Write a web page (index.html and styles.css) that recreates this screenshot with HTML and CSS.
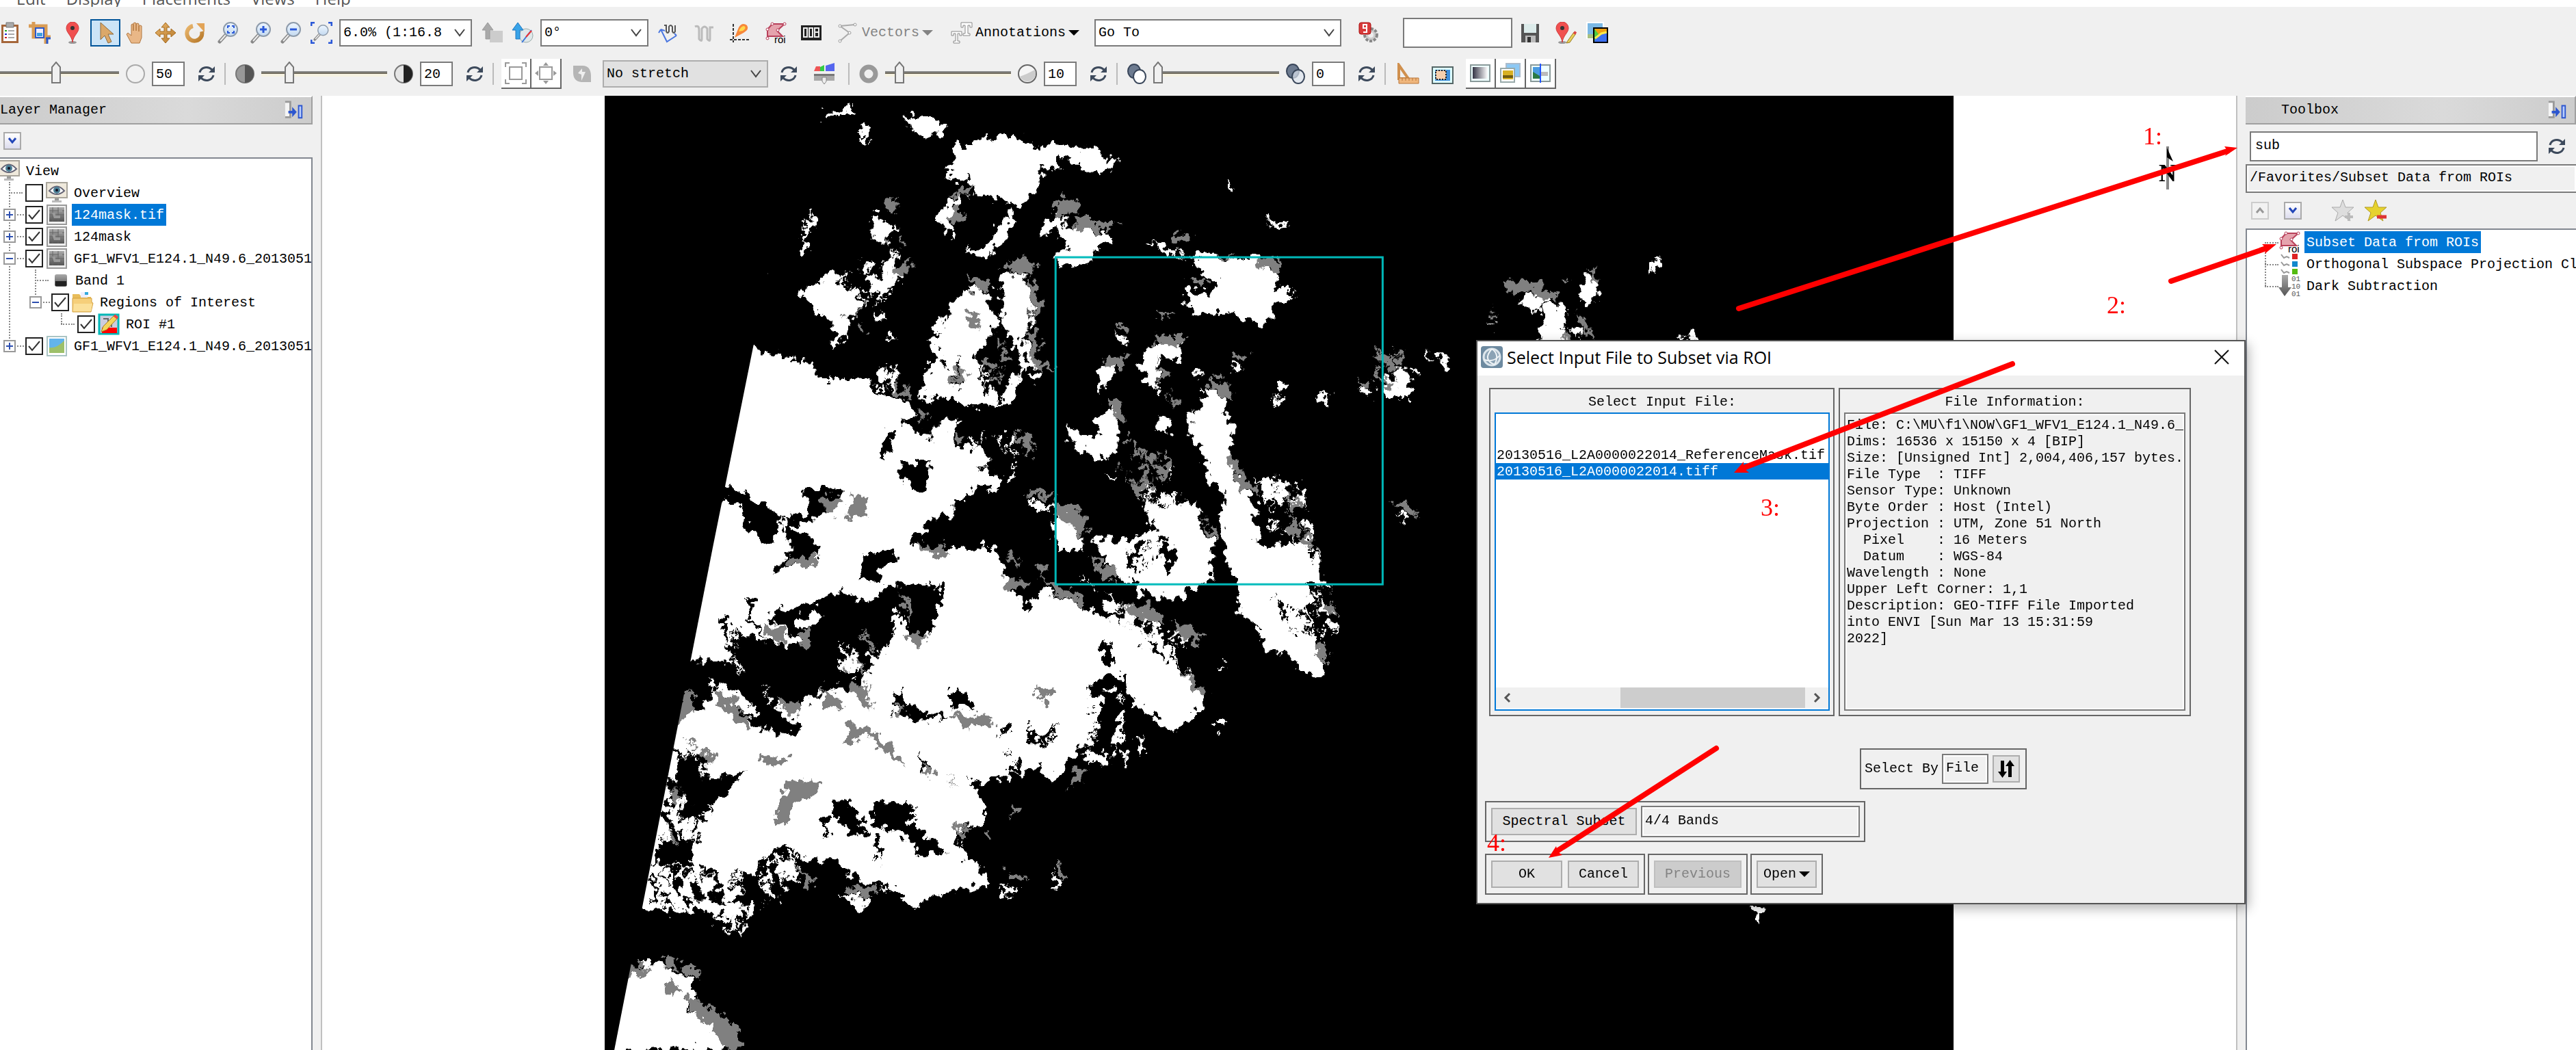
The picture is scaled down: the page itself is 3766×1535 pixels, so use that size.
FILE: index.html
```html
<!DOCTYPE html>
<html lang="en">
<head>
<meta charset="utf-8">
<title>ENVI</title>
<link rel="stylesheet" href="styles.css">
</head>
<body>
<svg class="defs" aria-hidden="true">
  <defs>
    <linearGradient id="glass" x1="0" y1="0" x2="0" y2="1"><stop offset="0" stop-color="#eef6ff"/><stop offset="1" stop-color="#c3d9f0"/></linearGradient>
    <linearGradient id="steel" x1="0" y1="0" x2="0" y2="1"><stop offset="0" stop-color="#aaa"/><stop offset="1" stop-color="#555"/></linearGradient>
    <linearGradient id="gold" x1="0" y1="0" x2="1" y2="1"><stop offset="0" stop-color="#e9b66d"/><stop offset="1" stop-color="#b87a2b"/></linearGradient>
  </defs>
  <symbol id="refresh" viewBox="0 0 32 32"><g fill="none" stroke="#3d4a5c" stroke-width="3"><path d="M6 14C8 6 18 4 24 10"/><path d="M26 18C24 26 14 28 8 22"/></g><path d="M28 5v9h-9zM4 27v-9h9z" fill="#3d4a5c"/></symbol>
  <symbol id="lens" viewBox="0 0 32 32"><path d="M13 18 3 29" stroke="#888" stroke-width="5" stroke-linecap="round"/><path d="M12 19 4 28" stroke="#eee" stroke-width="2"/><circle cx="19" cy="11" r="10" fill="url(#glass)" stroke="#8d9bab" stroke-width="2"/></symbol>
  <symbol id="pin" viewBox="0 0 32 32"><ellipse cx="16" cy="30" rx="6" ry="2" fill="#999"/><path d="M16 30C15 20 7 16 7 9a9 9 0 0 1 18 0c0 7-8 11-9 21z" fill="#f05050" stroke="#d03a3a"/><circle cx="16" cy="9" r="3" fill="#333"/></symbol>
  <symbol id="eye" viewBox="0 0 32 32"><rect x="1" y="1" width="30" height="22" fill="#efe9dc" stroke="#a9a59b" stroke-width="2"/><path d="M5 13Q16 0 27 13Q16 23 5 13z" fill="#fff" stroke="#667" stroke-width="2"/><circle cx="16" cy="12" r="5" fill="#4c7f95"/><circle cx="16" cy="12" r="2" fill="#112"/><path d="M13 24h6v3h-6z" fill="#999"/><path d="M9 27h14v3H9z" fill="#bbb"/></symbol>
  <symbol id="raster" viewBox="0 0 32 32"><rect x="2" y="2" width="28" height="28" fill="#eee" stroke="#999" stroke-width="2"/><rect x="5" y="5" width="22" height="21" fill="url(#steel)"/><path d="M5 10h22M5 16h22M10 5v21M18 5v21" stroke="#666"/><path d="M9 13h5v4h7v4h-9zM19 8h5v4h-5z" fill="#999"/></symbol>
  <symbol id="photo" viewBox="0 0 32 32"><rect x="2" y="2" width="28" height="28" fill="#fff" stroke="#aac4c4" stroke-width="2"/><rect x="5" y="5" width="22" height="21" fill="#63b4ea"/><path d="M5 26V18q10 2 22-10v18z" fill="#9dc06a"/></symbol>
  <symbol id="roi" viewBox="0 0 32 32"><path d="M11 3H29L18 13l8 8H4V11z" fill="#e5a3ad" stroke="#b8405a" stroke-width="2"/><g fill="#fff" stroke="#b8405a"><circle cx="11" cy="3" r="2"/><circle cx="29" cy="3" r="2"/><circle cx="4" cy="11" r="2"/><circle cx="19" cy="12" r="2"/><circle cx="4" cy="24" r="2"/></g><text x="14" y="31" font-family="Liberation Sans" font-size="15">roi</text></symbol>
  <symbol id="dock" viewBox="0 0 32 32"><path d="M2 3h8v24H2" fill="#f5f5f5" stroke="#999" stroke-width="3"/><path d="M23 9h5v19h-5z" fill="#b9cdfb" stroke="#2d56cf" stroke-width="2"/><path d="M7 17h6v-6l7 8-7 8v-6H7z" fill="#2d56cf"/></symbol>
  <symbol id="rings" viewBox="0 0 32 32"><ellipse cx="12" cy="12" rx="9" ry="10" fill="#6d7b90" stroke="#39465a" stroke-width="2"/></symbol>
</svg>

<nav class="menubar"><a href="#">Edit</a><a href="#">Display</a><a href="#">Placements</a><a href="#">Views</a><a href="#">Help</a></nav>

<header class="toolbars">
  <div class="toolbar primary">
    <div class="group">
      <button class="tool" aria-label="Data manager"><svg viewBox="0 0 32 32"><rect x="4" y="4" width="25" height="27" fill="#a5663a"/><path d="M7 7h19v21H7z" fill="#fff"/><path d="M11 1h11v7H11z" fill="#aaa" stroke="#777"/><path d="M9 13h3" stroke="#2a2" stroke-width="2"/><path d="M9 18h3" stroke="#22c" stroke-width="2"/><path d="M9 23h3" stroke="#c22" stroke-width="2"/><path d="M14 13h9M14 18h9M14 23h9" stroke="#aaa" stroke-width="2"/></svg></button>
      <button class="tool" aria-label="Crop"><svg viewBox="0 0 32 32"><path d="M7 0v22h25M0 6h25v26" fill="none" stroke="#d99c55" stroke-width="5"/><path d="M10 9h12v14H10z" fill="#eef" stroke="#2a58c8" stroke-width="2"/><path d="M12 16h8v5h-8z" fill="#3fa0e0"/><path d="M25 24h7M27 24v8" stroke="#2a58c8" stroke-width="3"/></svg></button>
    </div>
    <button class="tool" aria-label="Pin"><svg><use href="#pin"/></svg></button>
    <div class="group">
      <button class="tool pressed" aria-label="Select"><svg viewBox="0 0 32 32"><path d="M9 1v25l6-6 5 11 5-2-5-11h8z" fill="#dba869" stroke="#8b6a3e"/></svg></button>
      <button class="tool" aria-label="Pan"><svg viewBox="0 0 32 32"><path d="M10 31 3 18l2-2 5 4V4q2-2 3 0v9V2q2-2 4 0v11V3q2-2 4 0v11V6q3-2 4 0v17l-3 8z" fill="#e9b787" stroke="#b0763f"/></svg></button>
      <button class="tool" aria-label="Fly"><svg viewBox="0 0 32 32"><path d="m16 1 6 7h-4v6h6v-4l7 6-7 6v-4h-6v6h4l-6 7-6-7h4v-6H8v4l-7-6 7-6v4h6V8h-4z" fill="url(#gold)" stroke="#a56a1d"/></svg></button>
      <button class="tool" aria-label="Rotate"><svg viewBox="0 0 32 32"><path d="M12 6A11 11 0 1 0 25 14" fill="none" stroke="url(#gold)" stroke-width="6"/><path d="M17 2h12v13z" fill="#e2a457"/><circle cx="16" cy="18" r="4" fill="#eee"/></svg></button>
    </div>
    <button class="tool" aria-label="Zoom"><svg viewBox="0 0 32 32"><use href="#lens"/><path d="M15 9V6h3m3 0h3v3m0 4v3h-3m-3 0h-3v-3" fill="none" stroke="#2a58d8" stroke-width="2"/></svg></button>
    <div class="group">
      <button class="tool" aria-label="Zoom in"><svg viewBox="0 0 32 32"><use href="#lens"/><path d="M14 11h10M19 6v10" stroke="#2a58d8" stroke-width="3"/></svg></button>
      <button class="tool" aria-label="Zoom out"><svg viewBox="0 0 32 32"><use href="#lens"/><path d="M14 11h10" stroke="#2a58d8" stroke-width="3"/></svg></button>
      <button class="tool" aria-label="Full extent"><svg viewBox="0 0 32 32"><use href="#lens" x="4" y="4" width="24" height="24"/><path d="M1 6V1h5m20 0h5v5m0 20v5h-5M6 31H1v-5" fill="none" stroke="#2a58d8" stroke-width="3"/></svg></button>
    </div>
    <select class="combo zoom" aria-label="Zoom level"><option>6.0% (1:16.8)</option></select>
    <div class="group">
      <button class="tool" aria-label="North up" disabled><svg viewBox="0 0 32 32"><path d="M12 13h19v17H12z" fill="#ccc"/><path d="m9 1 8 11h-5v13H6V12H1z" fill="#aaa" stroke="#999"/></svg></button>
      <button class="tool" aria-label="Map north up"><svg viewBox="0 0 32 32"><circle cx="21" cy="20" r="10" fill="#dfe8ea" stroke="#9aa"/><path d="m15 30 14-18" stroke="#3b76d8" stroke-width="2"/><path d="m21 22 8-9" stroke="#e33" stroke-width="2"/><path d="m9 1 8 11h-5v13H6V12H1z" fill="#38a3e8" stroke="#1d77bf"/></svg></button>
    </div>
    <select class="combo angle" aria-label="Rotation"><option>0°</option></select>
    <div class="group wide">
      <button class="tool" aria-label="Arbitrary profile"><svg viewBox="0 0 32 32"><path d="M9 5h3v9q2 4 4 0V7q2-4 5 0v7q2 4 4 0V5" fill="none" stroke="#555" stroke-width="2"/><path d="m4 11 9 18 14-9M4 11l-3 5M4 11l6 2m17 7-3-3" fill="none" stroke="#4a76e0" stroke-width="2"/></svg></button>
      <button class="tool" aria-label="Spectral profile" disabled><svg viewBox="0 0 32 32"><path d="M2 7q6-3 6 5v13q4 5 4 0V10q4-6 8 0v15q4 5 4 0V8h5" fill="none" stroke="#bbb" stroke-width="3"/></svg></button>
      <button class="tool" aria-label="Scatter plot"><svg viewBox="0 0 32 32"><path d="M6 3v27M1 26h29" stroke="#333" stroke-width="2" stroke-dasharray="4 2"/><path d="M8 23 14 8q5-8 12-3 4 6-5 11z" fill="#f7873a"/><path d="m14 14q3-8 8-8 4 3-2 7z" fill="#ffd84a"/></svg></button>
      <button class="tool" aria-label="Region of interest"><svg><use href="#roi"/></svg></button>
      <button class="tool" aria-label="Counter"><svg viewBox="0 0 32 32"><path d="M1 5h30v22H1z" fill="#222"/><g fill="none" stroke="#eee" stroke-width="2"><rect x="5" y="9" width="5" height="13"/><rect x="13" y="9" width="5" height="13"/><rect x="21" y="9" width="6" height="6"/><rect x="21" y="15" width="6" height="7"/></g></svg></button>
    </div>
    <button class="menu-tool muted"><svg viewBox="0 0 32 32"><path d="M4 6 26 4M4 6l14 10L4 28" fill="none" stroke="#aaa" stroke-width="2"/><g fill="#fff" stroke="#999"><circle cx="4" cy="6" r="2"/><circle cx="26" cy="4" r="2"/><circle cx="18" cy="16" r="2"/><circle cx="4" cy="28" r="2"/></g></svg>Vectors<i class="caret"></i></button>
    <button class="menu-tool"><svg viewBox="0 0 32 32"><path d="M15 1h16v7h-3V5h-3v12h3v3H18v-3h3V5h-3v3h-3zM1 14h15v6h-3v-3h-3v11h3v3H4v-3h3V17H4v3H1z" fill="#fff" stroke="#888"/></svg>Annotations<i class="caret"></i></button>
    <select class="combo goto" aria-label="Go to"><option>Go To</option></select>
    <button class="tool roomy" aria-label="Process manager"><svg viewBox="0 0 32 32"><circle cx="19" cy="19" r="9" fill="#ccc" stroke="#888" stroke-width="4" stroke-dasharray="4 2"/><circle cx="19" cy="19" r="4" fill="#eee"/><rect x="2" y="1" width="17" height="17" rx="3" fill="#d83a3a" stroke="#a11"/><path d="M13 9H8V4h5v11H8" fill="none" stroke="#fff" stroke-width="2"/></svg></button>
    <input class="mark-name" type="text" aria-label="Placemark name">
    <div class="group wide">
      <button class="tool" aria-label="Save"><svg viewBox="0 0 32 32"><path d="M3 3h26v27H3z" fill="#555"/><path d="M7 3h18v13H7z" fill="#dcebea"/><path d="M9 20h15v10H9z" fill="#bbb"/><path d="M12 22h5v8h-5z" fill="#333"/></svg></button>
      <button class="tool" aria-label="Edit placemark"><svg viewBox="0 0 32 32"><use href="#pin" x="-5"/><path d="m18 29 10-14 3 2-9 13-5 1z" fill="#e8cf5a" stroke="#987a20"/><path d="m28 15 3 2" stroke="#d44" stroke-width="4"/></svg></button>
      <button class="tool last" aria-label="Chip view"><svg viewBox="0 0 32 32"><rect x="1" y="1" width="24" height="23" fill="#7bb8e4" stroke="#fff" stroke-width="2"/><path d="M2 18h10v6H2z" fill="#a8c080"/><rect x="11" y="9" width="20" height="21" fill="#f0a010" stroke="#000" stroke-width="2"/><path d="M12 10l6 8 3-2v13h-9z" fill="#4ecb40"/><path d="M12 29q1-9 8-10l10-3v13z" fill="#3c6ff0"/><path d="m13 24 9-7 8-2" fill="none" stroke="#ffe94a" stroke-width="3"/></svg></button>
    </div>
  </div>

  <div class="toolbar display">
    <div class="adjust">
      <svg viewBox="0 0 32 32"><circle cx="16" cy="16" r="13" fill="#ddd"/></svg>
      <input type="range" value="50" aria-label="Brightness">
      <svg viewBox="0 0 32 32"><circle cx="16" cy="16" r="13" fill="#f2f2f2" stroke="#aaa" stroke-width="2"/></svg>
      <input class="num" type="text" value="50" aria-label="Brightness value">
      <button class="reset" aria-label="Reset brightness"><svg><use href="#refresh"/></svg></button>
    </div>
    <div class="adjust">
      <svg viewBox="0 0 32 32"><circle cx="16" cy="16" r="13" fill="#999" stroke="#777" stroke-width="2"/><path d="M16 3a13 13 0 0 1 0 26z" fill="#555"/></svg>
      <input type="range" value="20" aria-label="Contrast">
      <svg viewBox="0 0 32 32"><circle cx="16" cy="16" r="13" fill="#e5e5e5" stroke="#777" stroke-width="2"/><path d="M16 3a13 13 0 0 1 0 26z" fill="#222"/></svg>
      <input class="num" type="text" value="20" aria-label="Contrast value">
      <button class="reset" aria-label="Reset contrast"><svg><use href="#refresh"/></svg></button>
    </div>
    <div class="stretch">
      <div class="toggles">
        <button class="toggle" aria-label="Full extent stretch"><svg viewBox="0 0 32 32"><path d="M7 7h18v18H7zM1 7V1h6m18 0h6v6m0 18v6h-6M7 31H1v-6" fill="none" stroke="#999" stroke-width="2"/></svg></button>
        <button class="toggle" aria-label="View extent stretch"><svg viewBox="0 0 32 32"><path d="M7 7h18v18H7z" fill="none" stroke="#999" stroke-width="2"/><path d="m16 0 4 5h-8zM16 32l4-5h-8zM0 16l5-4v8zM32 16l-5-4v8z" fill="#999"/></svg></button>
      </div>
      <svg viewBox="0 0 32 32"><path d="M3 4h14q11 0 12 14v10H15Q3 27 3 14z" fill="#b5b5b5"/><path d="m10 15 6-7v5h5l-6 13v-9z" fill="#eee"/></svg>
      <select class="combo stretch-type" aria-label="Stretch"><option>No stretch</option></select>
      <button class="reset" aria-label="Reset stretch"><svg><use href="#refresh"/></svg></button>
      <button class="reset" aria-label="Histogram stretch"><svg viewBox="0 0 32 32"><path d="M1 12 4 5h6v7z" fill="#e55"/><path d="M10 12V6l6-3v9z" fill="#3c4"/><path d="M18 12V4l13-4v12z" fill="#56e"/><path d="M1 16h30v3H1z" fill="#777"/><path d="M1 19h30v7H1z" fill="#aaa"/><path d="M13 21h6v6l-3 4-3-4z" fill="#eee" stroke="#888"/></svg></button>
    </div>
    <div class="adjust">
      <svg viewBox="0 0 32 32"><circle cx="16" cy="16" r="10" fill="none" stroke="#999" stroke-width="7"/></svg>
      <input type="range" value="8" aria-label="Sharpen">
      <svg viewBox="0 0 32 32"><circle cx="16" cy="16" r="13" fill="#f5f5f5" stroke="#666" stroke-width="2"/><path d="M5 20Q16 16 27 10a12 12 0 0 1-22 10z" fill="#ccc"/></svg>
      <input class="num" type="text" value="10" aria-label="Sharpen value">
      <button class="reset" aria-label="Reset sharpen"><svg><use href="#refresh"/></svg></button>
    </div>
    <div class="adjust">
      <svg viewBox="0 0 32 32"><use href="#rings"/><ellipse cx="20" cy="20" rx="9" ry="10" fill="#fff" stroke="#39465a" stroke-width="2"/></svg>
      <input type="range" value="0" aria-label="Transparency">
      <svg viewBox="0 0 32 32"><use href="#rings"/><ellipse cx="20" cy="20" rx="9" ry="10" fill="#dde4ee" fill-opacity=".7" stroke="#39465a" stroke-width="2"/></svg>
      <input class="num" type="text" value="0" aria-label="Transparency value">
      <button class="reset" aria-label="Reset transparency"><svg><use href="#refresh"/></svg></button>
    </div>
    <div class="views">
      <button class="reset" aria-label="Mensuration"><svg viewBox="0 0 32 32"><path d="M2 3v20h14z" fill="none" stroke="#d0904e" stroke-width="4"/><path d="M2 22h29v8H2z" fill="#efb67c" stroke="#b9773a"/><path d="M7 22v4m5-4v4m5-4v4m5-4v4m5-4v4" stroke="#b9773a"/></svg></button>
      <button class="reset" aria-label="Animate"><svg viewBox="0 0 32 32"><path d="M1 6h30v24H1z" fill="#dff" stroke="#566" stroke-width="2"/><path d="M5 10h22v16H5z" fill="#3f8fdc"/><path d="M6 11h15v13H6z" fill="#f6cfae" stroke="#222" stroke-width="2" stroke-dasharray="2 2"/></svg></button>
      <div class="toggles">
        <button class="toggle" aria-label="Blend"><svg viewBox="0 0 32 32"><defs><linearGradient id="fade"><stop offset="0" stop-color="#334"/><stop offset="1" stop-color="#fff"/></linearGradient></defs><path d="M2 4h28v24H2z" fill="#eff" stroke="#8a9a9a" stroke-width="2"/><path d="M5 7h22v17H5z" fill="url(#fade)"/></svg></button>
        <button class="toggle" aria-label="Flicker"><svg viewBox="0 0 32 32"><path d="M10 2h20v19H10z" fill="#8cc8f4" stroke="#abc" stroke-width="2"/><path d="M2 9h20v20H2z" fill="#fff" stroke="#9aa" stroke-width="2"/><path d="M5 12h15v13H5z" fill="#d7b022"/><path d="M5 19h15v4H5z" fill="#705c10"/></svg></button>
        <button class="toggle" aria-label="Swipe"><svg viewBox="0 0 32 32"><path d="M2 4h28v24H2z" fill="#eff" stroke="#8a9a9a" stroke-width="2"/><path d="M5 7h10v17H5z" fill="#4a9be0"/><path d="M5 14l10 6v4H5z" fill="#2b7a44"/><path d="M17 14h10v6H17z" fill="#bbb"/><path d="M16 2v28" stroke="#25f" stroke-width="2"/></svg></button>
      </div>
    </div>
  </div>
</header>

<main class="workspace">
  <aside class="panel layers">
    <h2 class="panel-head"><span>Layer Manager</span><svg><use href="#dock"/></svg></h2>
    <div class="panel-tools"><button class="expand" aria-label="Expand all"></button></div>
    <ul class="tree">
      <li><div class="row root"><svg><use href="#eye"/></svg><span>View</span></div>
        <ul class="branch">
          <li><div class="row"><i class="stub"></i><input type="checkbox" aria-label="Overview"><svg><use href="#eye"/></svg><span>Overview</span></div></li>
          <li><div class="row"><button class="twist plus" aria-label="Expand"></button><input type="checkbox" checked aria-label="124mask.tif"><svg><use href="#raster"/></svg><span class="selected">124mask.tif</span></div></li>
          <li><div class="row"><button class="twist plus" aria-label="Expand"></button><input type="checkbox" checked aria-label="124mask"><svg><use href="#raster"/></svg><span>124mask</span></div></li>
          <li><div class="row"><button class="twist" aria-label="Collapse"></button><input type="checkbox" checked aria-label="GF1 mask layer"><svg><use href="#raster"/></svg><span>GF1_WFV1_E124.1_N49.6_2013051</span></div>
            <ul class="branch nested">
              <li><div class="row band"><i class="stub"></i><svg viewBox="0 0 32 32"><rect x="7" y="7" width="18" height="18" rx="3" fill="url(#steel)"/><path d="M8 17h16v7H8z" fill="#222"/></svg><span>Band 1</span></div></li>
              <li><div class="row"><button class="twist" aria-label="Collapse"></button><input type="checkbox" checked aria-label="Regions of Interest"><svg viewBox="0 0 32 32"><path d="M1 4h10l3 4h14v22H1z" fill="#e8bc5a"/><path d="M13 1h10v8H13z" fill="#eef"/><path d="M19 1h5v4h-5z" fill="#3ad"/><path d="M1 10h28v6l2 1-3 13H1z" fill="#f6cf7a" stroke="#d3a140"/><path d="M3 18h27l-2 11H2z" fill="#fbe09a"/></svg><span>Regions of Interest</span></div>
                <ul class="branch nested leaf">
                  <li><div class="row"><i class="stub"></i><input type="checkbox" checked aria-label="ROI #1"><svg viewBox="0 0 32 32"><path d="M2 2h28v28H2z" fill="#ccd" stroke="#00b7b7" stroke-width="3"/><path d="M6 21h22v8H6z" fill="red"/><path d="M8 8h7v10M20 20V10" fill="none" stroke="#666" stroke-width="2"/><path d="m5 27 3-8L24 3l5 4-16 17z" fill="#f3d55b" stroke="#a68020"/><path d="m24 3 5 4" stroke="#e44" stroke-width="4"/></svg><span>ROI #1</span></div></li>
                </ul>
              </li>
            </ul>
          </li>
          <li><div class="row"><button class="twist plus" aria-label="Expand"></button><input type="checkbox" checked aria-label="GF1 image layer"><svg><use href="#photo"/></svg><span>GF1_WFV1_E124.1_N49.6_2013051</span></div></li>
        </ul>
      </li>
    </ul>
  </aside>

  <section class="view">
    <svg class="scene" viewBox="0 0 1972 1395" preserveAspectRatio="xMidYMin slice">
      <defs>
        <filter id="coast" x="0" y="0" width="1972" height="1395" filterUnits="userSpaceOnUse" color-interpolation-filters="sRGB">
          <feTurbulence type="fractalNoise" baseFrequency=".08 .07" numOctaves="4" seed="4" result="n"/>
          <feDisplacementMap in="SourceGraphic" in2="n" scale="30" xChannelSelector="R" yChannelSelector="G"/>
        </filter>
        <filter id="speckle" x="0" y="0" width="1972" height="1395" filterUnits="userSpaceOnUse" color-interpolation-filters="sRGB">
          <feTurbulence type="fractalNoise" baseFrequency=".07 .05" numOctaves="4" seed="9" result="n"/>
          <feColorMatrix in="n" values="0 0 0 0 0  0 0 0 0 0  0 0 0 0 0  40 0 0 0 -21" result="m"/>
          <feComposite in="SourceGraphic" in2="m" operator="in"/>
        </filter>
        <clipPath id="swath"><path d="M291 0H1972V1395H14L158 660z"/></clipPath>
      </defs>
      <rect width="1972" height="1395"/>
      <g clip-path="url(#swath)">
      <g filter="url(#coast)" shape-rendering="crispEdges">
        <g transform="translate(-23 660) scale(.8291 .46875)">
          <path fill="#fff" d="M185 0 720 0 735 100 770 190 800 130 870 180 900 220 960 240 1010 280 1050 380 1085 450 1080 500 1035 570 1000 540 960 480 940 430 905 470 900 600 870 610 850 660 815 725 790 680 740 720 690 730 700 860 640 880 665 960 690 1000 702 1050 600 1090 575 1130 545 1070 500 1045 460 1030 440 980 370 970 350 920 310 950 270 1060 240 1140 190 1130 70 1135 90 880 150 300zM930 0H1095L1090 100 1040 160 980 150 940 60zM1125 0H1275L1262 60 1270 170 1280 290 1298 400 1265 400 1240 340 1190 310 1180 240 1140 210 1150 150 1130 60zM880 620 915 640 905 675 870 660zM965 590 985 590 970 650zM1103 530 1124 540 1115 572zM1108 363 1124 370 1115 384zM723 1050 757 1065 735 1092zM815 1005 832 1060 820 1060zM445 1085 492 1092 480 1132zM225 1115 270 1110 245 1165zM1 1350 120 1290 150 1320 185 1350 180 1400 170 1440 210 1480 245 1568 0 1568z"/>
          <path fill="#000" d="M310 215 350 185 400 175 430 150 500 165 545 110 620 120 615 200 600 270 570 280 545 190 520 330 490 330 495 390 470 440 400 450 370 500 320 450 290 420 260 350 265 290 300 290 330 300 380 300zM340 65 370 15 410 60 400 85zM100 345 240 355 290 410 320 480 370 560 350 590 290 560 250 480 230 420 200 500 110 560zM255 260 295 280 300 350 270 350zM500 800 570 800 580 880 600 910 625 940 590 965 570 920 540 890 500 870zM425 800 460 780 490 890 470 895 435 840zM635 455 670 455 682 510 640 490zM160 650 195 655 185 700 220 720 280 700 230 780 200 850 150 830 180 800 150 740zM905 400 955 400 930 450 940 560 890 580 910 500 890 440zM545 440 565 500 635 530 570 540 535 500zM775 550 795 600 822 550 820 600 775 610zM140 900 190 930 180 990 110 980zM905 280 930 330 925 380 905 350zM965 260 1010 310 1060 400 1000 335zM480 30 540 15 530 70 500 110 480 60zM580 645 605 690 585 700zM725 550 742 560 730 600zM505 900 515 900 512 990zM275 150 290 160 285 220 310 280 285 250zM410 830 425 830 420 910zM670 720 720 760 700 800z"/>
          <path fill="#fff" d="M365 215 405 205 395 260 370 250zM330 960 372 1000 362 1035 335 1010zM215 420 250 430 300 520 290 540 250 470zM450 320 485 330 465 400 445 360zM570 830 580 850 570 870z"/>
          <path fill="#808080" d="M330 55 395 25 405 50 360 62zM305 240 345 265 350 300 320 290zM362 265 392 260 395 300 370 300zM220 440 260 480 285 565 265 550 230 500zM330 455 375 500 365 528 335 490zM460 420 505 485 490 510 470 460zM410 430 440 480 450 500 415 490zM175 430 190 510 140 560zM640 515 720 530 705 552 660 560zM500 570 560 680 530 655 500 600zM455 545 490 555 505 590 455 605zM298 650 350 650 348 682 300 670zM360 720 410 740 395 780 358 800 352 862 328 850 335 780zM585 670 610 700 600 725zM620 700 665 760 640 730zM800 95 870 150 872 180 820 140zM730 95 778 110 765 130 735 125zM885 30 935 80 925 110 900 80zM925 175 995 185 1020 235 960 215zM1030 230 1088 270 1070 305 1030 260zM1285 295 1304 320 1298 375 1282 340zM1050 390 1095 450 1075 460zM790 425 820 445 810 490 790 470zM855 685 880 695 860 735 842 755zM738 995 778 1040 740 1035zM825 975 845 1030 830 1048zM455 1060 508 1055 500 1090 460 1085zM365 995 402 1040 385 1062zM140 875 168 920 150 935zM138 725 168 760 150 800zM60 1285 112 1320 60 1355zM135 1262 163 1315 135 1305zM178 1290 203 1345 168 1330zM138 1340 164 1370 150 1400 132 1375zM180 1385 210 1430 250 1470 280 1568 240 1568 215 1500 175 1440zM560 270 602 275 580 315zM480 260 510 290 495 320zM545 130 570 200 560 220zM535 480 555 500 550 530zM700 890 710 905 700 915zM745 800 760 820 745 840zM635 870 675 880 665 920z"/>
        </g>
        <g transform="translate(-23 -10) scale(.7653 .4592)">
          <path fill="#fff" d="M447 100 455 75 480 62 505 52 512 75 490 85 470 80 450 105zM597 82 650 98 685 112 670 145 655 162 625 145 615 115zM518 112 532 118 527 140 540 172 513 155zM695 180 730 180 765 155 795 147 835 158 860 190 885 176 935 188 985 208 1004 240 985 270 925 240 900 205 888 267 862 240 860 300 840 355 810 376 785 345 745 345 728 320 726 275 700 300 675 262 697 235zM720 335 700 380 692 430 697 460 675 468 665 410 690 350zM550 395 570 430 590 440 565 492 545 482 535 435zM800 400 820 410 808 445 785 500 745 540 722 520 765 490 775 460zM905 385 915 440 960 450 998 465 995 490 965 520 968 540 905 572 890 530 910 500 895 440 860 480 855 465 880 410zM590 510 580 560 600 595 565 660 533 615 560 590 570 540zM400 650 410 630 455 605 510 640 522 660 500 740 490 790 460 825 470 780 460 730 440 715zM785 585 825 590 838 640 850 740 830 790 850 880 825 900 812 990 785 1000 795 960 830 870 800 780 786 700zM715 640 755 640 765 700 785 730 760 790 735 850 745 920 790 1000 720 1010 690 985 630 990 645 900 668 840 645 800 680 760 690 700zM290 815 370 855 415 870 445 920 490 922 535 918 545 960 610 1000 620 1040 600 1060 650 1110 680 1040 705 1060 690 1110 700 1140 750 1140 765 1180 740 1210 790 1240 790 1270 735 1255 725 1300 700 1310 695 1350 645 1375 640 1410 615 1420 620 1475 730 1475 790 1568 190 1568 225 1260zM912 1060 935 1100 970 1110 975 1030 1000 1020 1015 1080 1007 1160 985 1178 922 1135zM1150 526 1195 526 1210 545 1280 528 1315 600 1312 635 1357 650 1310 695 1290 752 1260 740 1215 705 1160 722 1135 645 1190 650 1200 620 1160 560zM1075 815 1132 815 1130 862 1095 850 1085 900 1092 967 1060 930 1053 880zM1183 952 1210 980 1232 1080 1220 1150 1230 1230 1260 1290 1275 1380 1285 1568 1240 1568 1215 1500 1205 1350 1215 1290 1185 1250 1175 1160 1150 1110 1143 1040 1165 1020zM1280 1240 1325 1240 1345 1320 1300 1330zM1320 1440 1360 1450 1385 1490 1400 1568 1300 1568 1310 1480zM1062 1285 1090 1330 1160 1310 1170 1400 1195 1450 1185 1568 1020 1568 985 1500 968 1440 990 1405 1010 1450 1050 1420 1080 1400 1060 1330zM880 1375 900 1355 930 1380 945 1462 900 1468zM838 1308 880 1318 885 1342 845 1338zM975 878 1007 885 1000 930 973 958zM1003 778 1030 790 1015 818zM1088 1028 1107 1040 1105 1102 1083 1085zM1228 868 1250 885 1230 907zM1515 930 1568 920 1568 982 1528 982zM1290 412 1337 430 1310 440zM1218 290 1234 298 1226 312zM1388 968 1414 975 1408 1002zM840 902 867 910 855 937zM540 705 567 730 555 748zM1065 483 1100 495 1142 548 1100 518zM1468 950 1500 960 1490 978zM570 780 588 790 565 808zM338 580 350 585 342 605zM1540 1345 1568 1360 1560 1385zM985 1225 1010 1235 995 1250z"/>
          <path fill="#000" d="M258 1258 300 1290 370 1360 350 1430 335 1445 300 1390 295 1330 240 1300zM415 1270 460 1270 480 1300 430 1370 385 1400 430 1430 440 1480 350 1542 385 1460 370 1360 410 1350zM595 1188 652 1188 640 1275 615 1275 598 1240zM570 1088 585 1100 572 1168 553 1162zM530 1478 578 1468 585 1490 555 1530 560 1568 515 1568zM655 1395 690 1380 690 1460 650 1460z"/>
          <path fill="#808080" d="M710 308 732 312 705 345 695 330zM562 346 590 350 580 397 558 370zM700 382 719 400 705 433 688 415zM895 346 932 352 928 402 888 395zM930 415 1012 422 1000 448 930 452zM1115 453 1148 463 1132 492 1113 480zM590 480 608 488 598 505zM578 558 618 548 602 597 573 587zM798 550 825 538 850 558 847 598 800 582zM842 600 864 690 852 742 836 620zM722 598 772 610 765 637 733 642zM720 708 747 718 748 763 725 748zM838 768 862 800 857 868 888 890 865 907 843 870zM695 882 722 900 714 947 688 937zM778 765 808 870 785 862zM1145 598 1188 608 1160 628zM1278 538 1322 540 1317 583 1290 572zM1200 528 1228 530 1215 550zM985 848 1024 850 1017 887 985 882zM1083 858 1105 910 1090 932zM1085 783 1138 788 1128 818 1083 818zM1083 713 1122 725 1095 735zM1008 748 1037 755 1032 782zM983 988 1012 990 1025 1052 1010 1052zM1105 963 1128 1000 1115 1005zM1188 918 1217 930 1233 992 1210 978 1183 947zM1222 1148 1242 1200 1278 1287 1250 1272 1218 1190zM1335 1288 1362 1325 1350 1342zM1358 1388 1392 1450 1370 1442zM888 1318 932 1318 952 1400 942 1418 895 1360zM840 1278 892 1283 885 1302 832 1297zM630 1018 650 1045 635 1058zM802 1093 847 1108 842 1182 828 1125zM505 1287 535 1300 524 1372 491 1367zM452 1298 487 1308 467 1352 443 1347zM383 1488 442 1493 432 1522 378 1512zM618 1453 682 1458 692 1487 640 1478zM1528 835 1562 848 1550 872zM1468 922 1497 938 1482 957zM575 918 618 992 580 972zM1050 1148 1084 1168 1082 1198zM1230 850 1260 840 1245 872zM1535 1310 1566 1330 1558 1350zM1175 1370 1198 1420 1190 1440zM970 1500 1000 1550 985 1560zM690 1090 715 1100 710 1130zM860 1505 878 1515 865 1560zM800 1480 825 1500 815 1510z"/>
        </g>
        <g transform="translate(1157 220) scale(.5294 .3333)">
          <path fill="#fff" d="M342 210 392 205 418 245 390 288 342 245zM408 262 440 252 470 268 464 430 378 430 400 370zM518 125 547 150 554 200 542 254 512 252 508 200zM702 65 722 62 714 114 700 108zM820 360 834 420 785 410zM478 343 514 370 508 405 484 382zM82 440 102 502 90 498zM112 478 130 470 148 530 130 522zM0 510 20 540 45 585 32 640 0 662zM255 325 278 357 262 352zM50 540 62 540 62 558 50 556z"/>
          <path fill="#808080" d="M298 145 400 162 415 200 452 205 448 242 400 232 375 195 320 213zM532 85 564 150 550 185 538 120zM456 132 480 142 465 160zM484 288 515 308 525 360 548 380 542 405 510 350zM458 340 485 425 458 425zM262 283 282 300 270 313zM0 450 28 468 15 512zM0 1118 32 1130 62 1182 20 1172z"/>
        </g>
        <path fill="#fff" d="M1674 1182h10l8 12-6 12-10-10z"/>
      </g>
      <g filter="url(#coast)">
      <g filter="url(#speckle)" shape-rendering="crispEdges">
        <path fill="#fff" d="M370 240 420 250 410 300 380 310zM300 160 315 180 290 240 282 225zM320 262 378 256 370 290 320 290zM480 330 515 300 525 330 500 380 480 360zM530 500 600 490 600 560 565 580zM400 400 440 390 430 430 400 430zM545 395 575 400 570 440 545 430zM770 530 830 540 830 600 780 590zM790 640 850 580 870 660 800 670zM950 560 1020 570 1045 690 1000 690zM1030 670 1070 740 1065 820 1035 770zM150 1150 210 1130 230 1180 200 1230 140 1190zM350 780 410 830 390 890 340 870zM700 700 770 750 850 790 830 840 760 790zM730 860 755 870 765 980 710 980zM860 400 875 400 870 440zM965 425 995 420 990 450 970 450zM230 1100 290 1110 250 1180 210 1180z"/>
        <path fill="#808080" d="M360 790 400 820 380 890 350 860zM550 390 590 380 570 430zM760 500 830 530 820 580 780 570zM970 550 1005 570 1035 660 1000 640zM1120 370 1160 385 1160 430 1135 425zM740 530 790 560 790 600zM1040 710 1070 740 1075 790zM120 940 160 960 150 1020zM350 320 370 310 380 350z"/>
        <path fill="#000" d="M100 950 150 970 150 1050 90 1060zM70 1120 230 1140 230 1180 70 1185zM170 760 250 830 260 900 190 870zM340 720 430 770 390 840 350 810zM710 860 755 880 740 970 700 960zM560 490 600 530 590 570 570 550zM760 660 820 640 830 670 770 700zM965 500 990 500 1000 620 975 620zM580 950 610 980 590 1000zM480 390 520 380 520 430zM80 1050 130 1040 140 1090 80 1110zM570 320 590 360 570 400zM800 650 840 660 830 710zM970 730 1040 760 1030 790 1000 780z"/>
      </g>
      </g>
      </g>
      <rect x="659" y="236" width="478" height="478" fill="none" stroke="#0bb" stroke-width="3"/>
    </svg>
  </section>

  <aside class="panel toolbox">
    <h2 class="panel-head"><span>Toolbox</span><svg><use href="#dock"/></svg></h2>
    <div class="search"><input type="text" value="sub" aria-label="Search toolbox"><button class="reset" aria-label="Refresh"><svg><use href="#refresh"/></svg></button></div>
    <input class="path" type="text" readonly value="/Favorites/Subset Data from ROIs" aria-label="Tool path">
    <div class="panel-tools fav">
      <button class="expand up" aria-label="Collapse all"></button>
      <button class="expand" aria-label="Expand all"></button>
      <button class="reset star" aria-label="Add favourite"><svg viewBox="0 0 32 32"><path d="m16 0 4 11h12l-9 8 4 12-11-8-11 8 4-12-9-8h12z" fill="#ddd" stroke="#aaa"/><path d="M25 19v12M19 25h12" stroke="#bbb" stroke-width="4"/></svg></button>
      <button class="reset" aria-label="Remove favourite"><svg viewBox="0 0 32 32"><path d="m16 0 4 11h12l-9 8 4 12-11-8-11 8 4-12-9-8h12z" fill="#e6d22e" stroke="#b09a20"/><path d="M18 25h14" stroke="#d33" stroke-width="5"/></svg></button>
    </div>
    <ul class="tree tools">
      <li><div class="row"><svg><use href="#roi"/></svg><span class="selected">Subset Data from ROIs</span></div></li>
      <li><div class="row"><svg viewBox="0 0 32 32"><path d="M4 2l4 5 4-2 4 2M4 13l4 5 4-2 4 2M4 24l4 5 4-2 4 2" fill="none" stroke="#999" stroke-width="2"/><path d="M20 1h8v8h-8z" fill="#d22"/><path d="M20 12h8v8h-8z" fill="#18c"/><path d="M20 23h8v8h-8z" fill="#5b1"/></svg><span>Orthogonal Subspace Projection Classification</span></div></li>
      <li><div class="row"><svg viewBox="0 0 32 32"><path d="M5 0h9v18h5L9 31 0 18h5z" fill="url(#steel)"/><g font-family="Liberation Mono" font-size="11" fill="#555"><text x="19" y="9">01</text><text x="19" y="20">10</text><text x="19" y="31">01</text></g></svg><span>Dark Subtraction</span></div></li>
    </ul>
  </aside>
</main>

<section class="dialog" role="dialog" aria-labelledby="dialog-title">
  <header class="titlebar">
    <svg viewBox="0 0 32 32"><rect width="32" height="32" rx="4" fill="#6d8aa0"/><circle cx="16" cy="16" r="12" fill="#8ba3b5" stroke="#dde6ec" stroke-width="3"/><path d="M16 4Q2 20 20 27M16 4q12 8 4 23M5 20q14 4 22-6" fill="none" stroke="#eef3f6" stroke-width="2"/></svg>
    <h1 id="dialog-title">Select Input File to Subset via ROI</h1>
    <button class="close" aria-label="Close"><svg viewBox="0 0 22 22"><path d="m1 1 20 20M21 1 1 21" stroke="#111" stroke-width="2"/></svg></button>
  </header>
  <div class="dialog-body">
    <div class="columns">
      <section class="frame files">
        <h3>Select Input File:</h3>
        <div class="list">
          <ul>
            <li></li><li></li>
            <li>20130516_L2A0000022014_ReferenceMask.tif</li>
            <li class="selected">20130516_L2A0000022014.tiff</li>
          </ul>
          <div class="scrollbar"><svg viewBox="0 0 12 16"><path d="M10 2 4 8l6 6" fill="none" stroke="#555" stroke-width="3"/></svg><i></i><svg viewBox="0 0 12 16"><path d="m2 2 6 6-6 6" fill="none" stroke="#555" stroke-width="3"/></svg></div>
        </div>
      </section>
      <section class="frame info">
        <h3>File Information:</h3>
        <pre>File: C:\MU\f1\NOW\GF1_WFV1_E124.1_N49.6_
Dims: 16536 x 15150 x 4 [BIP]
Size: [Unsigned Int] 2,004,406,157 bytes.
File Type  : TIFF
Sensor Type: Unknown
Byte Order : Host (Intel)
Projection : UTM, Zone 51 North
  Pixel    : 16 Meters
  Datum    : WGS-84
Wavelength : None
Upper Left Corner: 1,1
Description: GEO-TIFF File Imported
into ENVI [Sun Mar 13 15:31:59
2022]</pre>
      </section>
    </div>
    <div class="frame select-by">
      <label for="by">Select By</label><input id="by" type="text" readonly value="File"><button aria-label="Switch"><svg viewBox="0 0 28 28"><path d="M6 2h5v16h4l-6.500 9L2 18h4zM17 26h5V10h4l-6.500-9L13 10h4z" fill="#000"/></svg></button>
    </div>
    <div class="frame spectral">
      <button>Spectral Subset</button><input type="text" readonly value="4/4 Bands" aria-label="Spectral subset">
    </div>
    <div class="actions">
      <div class="frame"><button class="ok">OK</button><button class="ok">Cancel</button></div>
      <div class="frame"><button class="prev" disabled>Previous</button></div>
      <div class="frame"><button class="open">Open<i class="caret"></i></button></div>
    </div>
  </div>
</section>

<svg class="markup">
  <g><path d="M3169 214v63" stroke="#888" stroke-width="4"/><path d="M3168 216l9 20-9-6z"/><text class="north" x="3156" y="265">N</text></g>
  <g stroke="red" stroke-width="8" stroke-linecap="round"><path d="M2542 451 3256 221M3174 411 3313 363M2942 532 2549 684M2509 1094 2275 1245"/></g>
  <path fill="red" d="M3271 216 3253 228 3257 221 3252 214zM3328 357 3311 371 3313 363 3307 357zM2535 691 2549 675 2549 684 2557 691zM2264 1254 2275 1237 2277 1245 2284 1250z"/>
  <g class="step"><text x="3133" y="211">1:</text><text x="3080" y="458">2:</text><text x="2574" y="754">3:</text><text x="2174" y="1244">4:</text></g>
</svg>
</body>
</html>
```
FILE: styles.css
```css
* { box-sizing: border-box; }
body {
  margin: 0;
  height: 100vh;
  overflow: hidden;
  position: relative;
  display: flex;
  flex-direction: column;
  background: #f0f0f0;
  color: #000;
  font: 20px/24px "Liberation Mono", monospace;
}
button, input, select { font: inherit; color: inherit; margin: 0; border-radius: 0; }
button { padding: 0; border: 0; background: none; }
ul { list-style: none; margin: 0; padding: 0; }
h1, h2, h3 { margin: 0; font: inherit; }
svg { flex: none; }
.defs { position: absolute; width: 0; height: 0; }

/* menu */
.menubar {
  height: 10px;
  overflow: hidden;
  display: flex;
  align-items: flex-end;
  gap: 30px;
  padding-left: 24px;
  background: #fff;
}
.menubar a { color: #555; text-decoration: none; font: 24px/24px "Open Sans", sans-serif; }

/* toolbars */
.toolbars { height: 130px; padding-top: 8px; overflow: hidden; }
.toolbar { display: flex; align-items: center; }
.primary { height: 60px; gap: 4px; margin-left: -8px; }
.display { height: 60px; margin-left: -64px; }
.toolbar svg { width: 32px; height: 32px; display: block; }
.group { display: flex; }
.tool { width: 44px; height: 40px; display: flex; align-items: center; justify-content: center; flex: none; }
.wide .tool { width: 52px; }
.wide .last { width: 40px; }
.roomy { width: 72px; margin-right: 10px; }
.pressed { background: #cce4f7; border: 2px solid #005499; }
.combo {
  appearance: none;
  flex: none;
  height: 40px;
  padding: 0 40px 0 4px;
  border: 2px solid #7a7a7a;
  background: #fff url("data:image/svg+xml,%3Csvg xmlns='http://www.w3.org/2000/svg' width='16' height='12'%3E%3Cpath d='M1 1l7 9 7-9' fill='none' stroke='%23444' stroke-width='2'/%3E%3C/svg%3E") no-repeat right 8px center;
}
.zoom { width: 194px; margin-right: 4px; }
.angle { width: 158px; }
.goto { width: 361px; margin-left: 18px; }
.stretch-type { width: 242px; background-color: #e1e1e1; border-color: #adadad; }
.menu-tool { display: flex; align-items: center; gap: 4px; margin-left: 8px; }
.menu-tool + .menu-tool { margin-left: 22px; }
.muted { color: #838383; }
.caret { border: 8px solid transparent; border-top-color: currentColor; border-bottom: 0; }
.mark-name { width: 160px; height: 44px; border: 2px solid #7a7a7a; background: #fff; }
.mark-name + .wide { margin-left: -4px; }
.adjust { flex: none; width: 392px; display: flex; align-items: center; gap: 8px; padding-left: 12px; border-left: 2px solid #bbb; height: 32px; }
.num { width: 48px; height: 36px; padding: 0 4px; border: 2px solid #7a7a7a; background: #fff; }
.reset { width: 32px; height: 32px; flex: none; }
.reset svg { width: 32px; height: 32px; display: block; }
.num + .reset { margin-left: 8px; }
input[type="range"] { appearance: none; width: 184px; height: 32px; margin: 0; background: none; }
input[type="range"]::-webkit-slider-runnable-track { height: 8px; background: linear-gradient(#888 0 2px, #6e6a5c 2px 4px, #f6f2e2 4px); }
input[type="range"]::-webkit-slider-thumb {
  appearance: none;
  width: 14px;
  height: 32px;
  margin-top: -14px;
  background: url("data:image/svg+xml,%3Csvg xmlns='http://www.w3.org/2000/svg' width='14' height='32'%3E%3Cpath d='M1 31V8l6-7 6 7v23z' fill='%23f0f0f0' stroke='%23777' stroke-width='2'/%3E%3C/svg%3E");
}
.stretch, .views { display: flex; align-items: center; height: 32px; border-left: 2px solid #bbb; flex: none; }
.stretch { width: 520px; padding-left: 11px; gap: 14px; }
.stretch .reset + .reset { margin-left: 6px; }
.views { gap: 18px; padding-left: 17px; }
.toggles { display: flex; }
.toggle { width: 44px; height: 44px; padding: 0 5px; background: #fff; border-right: 2px solid #666; border-bottom: 2px solid #666; }

/* workspace */
.workspace { flex: 1; min-height: 0; display: grid; grid-template-columns: 457px 1fr 483px; column-gap: 12px; }
.panel { display: flex; flex-direction: column; min-width: 0; overflow: hidden; }
.panel-head {
  flex: none;
  height: 42px;
  display: flex;
  align-items: center;
  justify-content: space-between;
  padding-right: 10px;
  border-top: 2px solid #fff;
  border-bottom: 2px solid #a0a0a0;
  border-right: 2px solid #a0a0a0;
  background: linear-gradient(90deg, #ccc, #dadada 60%, #ccc);
}
.panel-head svg { width: 30px; height: 30px; }
.panel-tools { height: 48px; display: flex; align-items: center; padding-left: 5px; flex: none; }
.expand {
  width: 26px;
  height: 26px;
  border: 2px solid #aaa;
  background: url("data:image/svg+xml,%3Csvg xmlns='http://www.w3.org/2000/svg' width='14' height='10'%3E%3Cpath d='M2 1l5 6 5-6' fill='none' stroke='%232346b8' stroke-width='3'/%3E%3C/svg%3E") no-repeat center, linear-gradient(#fff, #dde);
}
.expand.up { border-color: #ccc; background: url("data:image/svg+xml,%3Csvg xmlns='http://www.w3.org/2000/svg' width='14' height='10'%3E%3Cpath d='M2 8l5-6 5 6' fill='none' stroke='%23999' stroke-width='3'/%3E%3C/svg%3E") no-repeat center, #f2f2f2; }
.tree { flex: 1; background: #fff; border: 2px solid #828790; border-bottom: 0; padding-top: 2px; overflow: hidden; }
.layers .tree { border-left: 0; }
.row { height: 32px; display: flex; align-items: center; gap: 4px; padding-left: 5px; white-space: nowrap; position: relative; }
.row > * { flex: none; }
.row svg { width: 32px; height: 32px; }
.row span { height: 32px; line-height: 34px; padding: 0 3px; margin-left: 2px; }
.selected { background: #0078d7; color: #fff; }
.root { padding-left: 0; margin-left: -3px; }
.branch { position: relative; }
.branch::before { content: ""; position: absolute; left: 13px; top: 0; bottom: 16px; border-left: 2px dotted #888; }
.nested { margin-left: 38px; }
.nested::before { bottom: 48px; }
.leaf::before { bottom: 16px; }
.stub { width: 20px; height: 2px; margin-left: 8px; border-top: 2px dotted #888; }
.band .stub + svg { margin-left: -2px; }
.band span { margin-left: -2px; }
.twist {
  position: relative;
  width: 18px;
  height: 18px;
  margin-right: 10px;
  border: 2px solid #999;
  background: linear-gradient(#2d4fb0, #2d4fb0) no-repeat center/10px 2px, #fff;
}
.twist.plus { background: linear-gradient(#2d4fb0, #2d4fb0) no-repeat center/10px 2px, linear-gradient(#2d4fb0, #2d4fb0) no-repeat center/2px 10px, #fff; }
.twist::after { content: ""; position: absolute; left: 18px; top: 6px; width: 10px; border-top: 2px dotted #888; }
input[type="checkbox"] { appearance: none; width: 26px; height: 26px; flex: none; border: 2px solid #222; background: #fff; }
input[type="checkbox"]:checked { background: #fff url("data:image/svg+xml,%3Csvg xmlns='http://www.w3.org/2000/svg' width='22' height='22'%3E%3Cpath d='M3 11l5 6L19 4' fill='none' stroke='%23333' stroke-width='2'/%3E%3C/svg%3E") no-repeat center; }
.view { border-left: 2px solid #c0c0c0; border-right: 2px solid #c0c0c0; background: #fff; display: flex; justify-content: center; min-width: 0; }
.scene { width: 70.5%; height: 100%; display: block; }

/* toolbox */
.toolbox .panel-head { padding-left: 52px; }
.search { display: flex; align-items: center; gap: 12px; padding: 10px 12px 4px 6px; }
.search input { flex: 1; min-width: 0; height: 44px; padding: 0 6px 4px; border: 2px solid #7a7a7a; background: #fff; }
.path { width: 100%; height: 42px; padding: 0 4px 4px; border: 2px solid #7a7a7a; border-right: 0; background: #f0f0f0; box-shadow: inset 0 0 0 2px #fff; }
.fav { height: 52px; padding-left: 8px; gap: 16px; }
.fav .expand + .expand { margin-left: 6px; }
.fav .star { margin-left: 28px; }
.tools { border-right: 0; }
.tools .row { padding-left: 46px; }
.tools .row::before { content: ""; position: absolute; left: 26px; top: 16px; width: 20px; border-top: 2px dotted #888; }
.tools li + li .row::after { content: ""; position: absolute; left: 26px; bottom: 16px; height: 32px; border-left: 2px dotted #888; }

/* dialog window */
.dialog { position: absolute; left: 2158px; top: 497px; width: 1125px; background: #f0f0f0; border: 2px solid #555; box-shadow: 4px 6px 16px rgba(0, 0, 0, .3); }
.titlebar { height: 50px; display: flex; align-items: center; gap: 6px; padding: 0 22px 4px 5px; background: #fff; }
.titlebar svg { width: 32px; height: 32px; }
.titlebar h1 { flex: 1; font: 25px/32px "Open Sans", sans-serif; }
.titlebar .close svg { width: 22px; height: 22px; display: block; }
.dialog-body { padding: 18px 78px 12px 11px; }
.frame { border: 2px solid #666; }
.columns { display: flex; gap: 6px; padding-left: 6px; }
.files { width: 505px; padding: 0 5px 6px 6px; }
.info { width: 515px; padding: 0 6px; }
.frame h3 { height: 34px; line-height: 38px; text-align: center; }
.list { height: 436px; display: flex; flex-direction: column; justify-content: space-between; background: #fff; border: 2px solid #0078d7; overflow: hidden; }
.list li { height: 24px; line-height: 26px; white-space: nowrap; padding-left: 1px; }
.scrollbar { height: 30px; margin-bottom: 2px; display: flex; align-items: center; padding: 0 10px; background: #f0f0f0; }
.scrollbar svg { width: 12px; height: 16px; }
.scrollbar i { width: 270px; height: 30px; margin: 0 12px 0 auto; background: #cdcdcd; }
.info pre { height: 436px; margin: 0; padding: 5px 2px; font: inherit; border: 2px solid #7a7a7a; overflow: hidden; box-shadow: inset 0 0 0 2px #fff; }
.dialog .frame button { height: 40px; border: 2px solid #adadad; background: #e1e1e1; }
.dialog .frame input { border: 2px solid #7a7a7a; background: #f0f0f0; box-shadow: inset 0 0 0 2px #fff; padding: 0 4px 4px; min-width: 0; }
.select-by { width: 244px; height: 60px; margin: 47px 0 0 548px; display: flex; align-items: center; padding: 0 8px 0 5px; }
.select-by input { width: 68px; height: 44px; margin: 0 6px 0 5px; }
.select-by button { width: 40px; display: flex; align-items: center; justify-content: center; }
.select-by svg { width: 28px; height: 28px; }
.spectral { width: 556px; height: 60px; margin-top: 17px; padding: 0 6px 0 7px; display: flex; align-items: center; gap: 6px; }
.spectral button { width: 213px; }
.spectral input { flex: 1; height: 46px; }
.actions { display: flex; gap: 4px; margin-top: 17px; }
.actions .frame { height: 60px; display: flex; align-items: center; gap: 8px; padding: 0 7px; }
.ok { width: 104px; }
.prev { width: 128px; color: #838383; }
.dialog .frame .prev { background: #ccc; border-color: #bfbfbf; }
.open { width: 88px; display: flex; align-items: center; justify-content: center; gap: 4px; }

/* step arrows drawn over the windows */
.markup { position: absolute; left: 0; top: 0; width: 100%; height: 100%; overflow: visible; pointer-events: none; }
.step { fill: red; font: 36px "Liberation Serif", serif; }
.north { font: bold 36px "Liberation Serif", serif; }
```
